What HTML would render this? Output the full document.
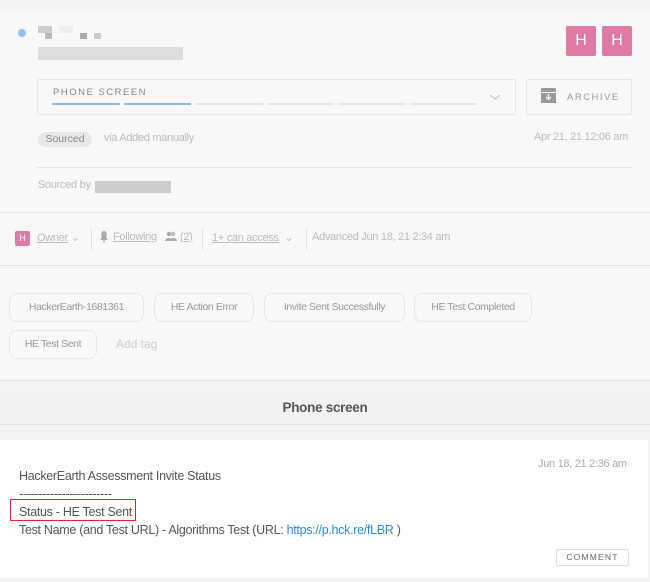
<!DOCTYPE html>
<html><head><style>
body{margin:0;width:650px;height:582px;background:#f8f8f8;font-family:"Liberation Sans",sans-serif;position:relative;overflow:hidden}
.a{position:absolute}
.t{font-size:11px;color:#bbb;white-space:nowrap;letter-spacing:-0.3px}
.tag{position:absolute;height:29px;border:1px solid #e6e6e6;border-radius:8px;box-sizing:border-box;font-size:10.5px;color:#999;line-height:27px;text-align:center;letter-spacing:-0.4px;background:#f8f8f8}
.px{position:absolute;background:#ccc}
</style></head><body>
<div class="a" style="left:0;top:0;width:650px;height:11px;background:#f3f3f3"></div>
<div class="a" style="left:0;top:11px;width:650px;height:201px;background:#f8f8f8;border-bottom:1px solid #e2e2e2"></div>
<div class="a" style="left:18px;top:29px;width:8px;height:8px;border-radius:50%;background:#8fc1f5"></div>
<div class="px" style="left:38px;top:26px;width:14px;height:7px;background:#ccc"></div>
<div class="px" style="left:45px;top:33px;width:7px;height:6px;background:#bbb"></div>
<div class="px" style="left:59px;top:26px;width:14px;height:7px;background:#eee"></div>
<div class="px" style="left:80px;top:33px;width:7px;height:6px;background:#aaa"></div>
<div class="px" style="left:94px;top:33px;width:7px;height:6px;background:#ccc"></div>
<div class="px" style="left:38px;top:47px;width:145px;height:13px;background:#ddd"></div>
<div class="a" style="left:566px;top:26px;width:30px;height:30px;background:#e07aa4;border-radius:2px;color:#fff;font-size:16px;text-align:center;line-height:30px">H</div>
<div class="a" style="left:602px;top:26px;width:30px;height:30px;background:#e07aa4;border-radius:2px;color:#fff;font-size:16px;text-align:center;line-height:30px">H</div>
<div class="a" style="left:37px;top:79px;width:479px;height:36px;border:1px solid #e6e6e6;border-radius:2px;box-sizing:border-box"></div>
<div class="a" style="left:53px;top:87px;font-size:9.5px;letter-spacing:1.5px;color:#888">PHONE SCREEN</div>
<div class="a" style="left:52px;top:103px;width:68px;height:2px;background:#8fb6f2"></div>
<div class="a" style="left:124px;top:103px;width:67px;height:2px;background:#8fb6f2"></div>
<div class="a" style="left:195px;top:103px;width:68px;height:2px;background:#e4e4e4"></div>
<div class="a" style="left:267px;top:103px;width:67px;height:2px;background:#e4e4e4"></div>
<div class="a" style="left:338px;top:103px;width:68px;height:2px;background:#e4e4e4"></div>
<div class="a" style="left:410px;top:103px;width:67px;height:2px;background:#e4e4e4"></div>
<svg class="a" style="left:489px;top:94px" width="12" height="7"><path d="M1 1l5 4 5-4" stroke="#bbb" fill="none"/></svg>
<div class="a" style="left:526px;top:79px;width:106px;height:36px;border:1px solid #e6e6e6;border-radius:2px;box-sizing:border-box"></div>
<svg class="a" style="left:541px;top:88px" width="15" height="15"><rect x="0" y="0" width="15" height="4" rx="1" fill="#999"/><rect x="0" y="5" width="15" height="10" fill="#999"/><path d="M7.5 6v5M5 9l2.5 2.5L10 9" stroke="#f8f8f8" stroke-width="1.5" fill="none"/></svg>
<div class="a" style="left:567px;top:92px;font-size:9.5px;letter-spacing:1.5px;color:#999">ARCHIVE</div>
<div class="a" style="left:38px;top:132px;width:54px;height:15px;border-radius:8px;background:#e8e8e8;font-size:10.5px;color:#888;text-align:center;line-height:15px">Sourced</div>
<div class="a t" style="left:104px;top:132px">via Added manually</div>
<div class="a t" style="left:534px;top:131px">Apr 21, 21 12:06 am</div>
<div class="a" style="left:37px;top:167px;width:595px;height:1px;background:#e6e6e6"></div>
<div class="a t" style="left:38px;top:179px">Sourced by</div>
<div class="px" style="left:95px;top:181px;width:76px;height:12px;background:#ccc"></div>
<div class="a" style="left:15px;top:231px;width:15px;height:15px;background:#e07aa4;border-radius:2px;color:#fff;font-size:9px;text-align:center;line-height:15px">H</div>
<div class="a t" style="left:37px;top:231px"><u>Owner</u> ⌄</div>
<div class="a" style="left:91px;top:228px;width:1px;height:22px;background:#e2e2e2"></div>
<svg class="a" style="left:99px;top:230px" width="10" height="12"><path d="M5 1C2.5 1 2.5 3 2.5 5v3L1 10h8L7.5 8V5C7.5 3 7.5 1 5 1z" fill="#aaa"/><rect x="4" y="10.5" width="2" height="1.5" fill="#aaa"/></svg>
<div class="a t" style="left:113px;top:231px"><u>Following</u></div>
<svg class="a" style="left:165px;top:231px" width="12" height="10"><circle cx="4" cy="3" r="2.2" fill="#aaa"/><circle cx="8" cy="3" r="2.2" fill="#bbb"/><path d="M0 10c0-4 8-4 8 0zM5 10c0-4 7-4 7 0z" fill="#aaa"/></svg>
<div class="a t" style="left:180px;top:231px"><u>(2)</u></div>
<div class="a" style="left:202px;top:228px;width:1px;height:22px;background:#e2e2e2"></div>
<div class="a t" style="left:212px;top:231px"><u>1+ can access</u> &nbsp;⌄</div>
<div class="a" style="left:306px;top:228px;width:1px;height:22px;background:#e2e2e2"></div>
<div class="a t" style="left:312px;top:231px">Advanced Jun 18, 21 2:34 am</div>
<div class="a" style="left:0;top:265px;width:650px;height:1px;background:#e2e2e2"></div>
<div class="a" style="left:0;top:266px;width:650px;height:7px;background:#f5f5f5"></div>
<div class="a" style="left:0;top:273px;width:650px;height:107px;background:#f8f8f8;border-bottom:1px solid #e2e2e2"></div>
<div class="tag" style="left:9px;top:293px;width:135px">HackerEarth-1681361</div>
<div class="tag" style="left:154px;top:293px;width:100px">HE Action Error</div>
<div class="tag" style="left:264px;top:293px;width:141px">Invite Sent Successfully</div>
<div class="tag" style="left:414px;top:293px;width:118px">HE Test Completed</div>
<div class="tag" style="left:9px;top:330px;width:88px">HE Test Sent</div>
<div class="a" style="left:116px;top:337px;font-size:12px;color:#ccc">Add tag</div>
<div class="a" style="left:0;top:381px;width:650px;height:11px;background:#f3f3f3"></div>
<div class="a" style="left:0;top:392px;width:650px;height:32px;background:#f2f2f2;border-bottom:1px solid #e2e2e2;text-align:center;font-size:13.5px;font-weight:bold;color:#555;line-height:32px;letter-spacing:-0.3px">Phone screen</div>
<div class="a" style="left:0;top:425px;width:650px;height:157px;background:#f3f3f3"></div>
<div class="a" style="left:0;top:440px;width:648px;height:138px;background:#fff"></div>
<div class="a" style="left:538px;top:458px;font-size:11px;color:#aaa;letter-spacing:-0.3px">Jun 18, 21 2:36 am</div>
<div class="a" style="left:19px;top:467px;font-size:12.5px;color:#555;line-height:18px;letter-spacing:-0.3px">HackerEarth Assessment Invite Status<br>------------------------<br>Status - HE Test Sent<br>Test Name (and Test URL) - Algorithms Test (URL: <span style="color:#2a8be0">https://p.hck.re/fLBR</span> )</div>
<div class="a" style="left:10px;top:499px;width:126px;height:22px;border:1px solid #e0242a;box-sizing:border-box"></div>
<div class="a" style="left:556px;top:549px;width:73px;height:17px;border:1px solid #ddd;border-radius:2px;box-sizing:border-box;font-size:8.5px;letter-spacing:1.2px;color:#666;text-align:center;line-height:15px">COMMENT</div>
</body></html>
